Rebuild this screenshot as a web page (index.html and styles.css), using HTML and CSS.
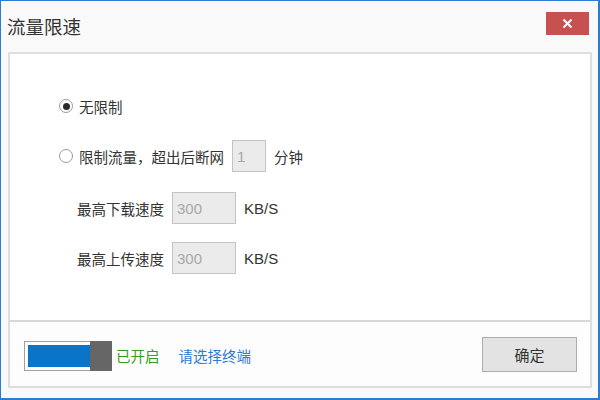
FILE: index.html
```html
<!DOCTYPE html>
<html lang="zh-CN">
<head>
    <meta charset="UTF-8">
    <title>流量限速</title>
    <link rel="stylesheet" href="styles.css">
</head>
<body>
    <div class="window">
        <div class="title-bar">
            <span class="title">流量限速</span>
            <button class="close-btn" type="button">
                <svg width="11" height="11" viewBox="0 0 11 11"><path d="M1.5 1.5 L9.5 9.5 M9.5 1.5 L1.5 9.5" stroke="#fff" stroke-width="2" fill="none"/></svg>
            </button>
        </div>

        <div class="panel">
            <div class="content">
                <label class="radio-row">
                    <span class="radio checked"></span>
                    <span>无限制</span>
                </label>
                <label class="radio-row limit">
                    <span class="radio"></span>
                    <span>限制流量，超出后断网</span>
                    <input class="field small" type="text" value="1" disabled>
                    <span class="unit">分钟</span>
                </label>
                <div class="speed-row">
                    <span>最高下载速度</span>
                    <input class="field" type="text" value="300" disabled>
                    <span class="unit">KB/S</span>
                </div>
                <div class="speed-row">
                    <span>最高上传速度</span>
                    <input class="field" type="text" value="300" disabled>
                    <span class="unit">KB/S</span>
                </div>
            </div>

            <div class="footer">
                <div class="toggle">
                    <span class="toggle-fill"></span>
                    <span class="toggle-knob"></span>
                </div>
                <span class="status">已开启</span>
                <a class="pick-link" href="#">请选择终端</a>
                <button class="ok-btn" type="button">确定</button>
            </div>
        </div>
    </div>
</body>
</html>
```

FILE: styles.css
```css
* {
    box-sizing: border-box;
}

body {
    margin: 0;
    font-family: "Noto Sans CJK SC", "Liberation Sans", sans-serif;
    font-size: 14.5px;
    color: #333;
}

.window {
    width: 600px;
    height: 400px;
    background: #f9f9f9;
    border: 1px solid #2b7cd3;
    border-right-width: 2px;
    border-bottom-width: 2px;
    display: flex;
    flex-direction: column;
}

.title-bar {
    height: 51px;
    display: flex;
    align-items: center;
    justify-content: space-between;
    padding: 0 9px 6px 6px;
}

.title {
    font-size: 18.5px;
    color: #333;
    margin-top: 4px;
}

.close-btn {
    width: 43px;
    height: 23px;
    border: none;
    background: #c75050;
    display: flex;
    align-items: center;
    justify-content: center;
    padding: 0;
}

.panel {
    flex: 1;
    margin: 0 6px 10px 7px;
    border: 2px solid #dedede;
    display: flex;
    flex-direction: column;
}

.content {
    height: 268px;
    background: #fff;
    border-bottom: 2px solid #d8d8d8;
    padding: 35px 0 0 49px;
}

.radio-row {
    display: flex;
    align-items: center;
    height: 34px;
    margin-bottom: 16px;
}

.radio-row.limit {
    margin-bottom: 19px;
}

.radio {
    width: 14px;
    height: 14px;
    border: 1px solid #9a9a9a;
    border-radius: 50%;
    background: #fff;
    margin-right: 6px;
    display: flex;
    align-items: center;
    justify-content: center;
}

.radio.checked::after {
    content: "";
    width: 7px;
    height: 7px;
    border-radius: 50%;
    background: #2b2b2b;
}

.field {
    width: 64px;
    height: 32px;
    border: 1px solid #c4c4c4;
    background: #ebebeb;
    color: #a8a8a8;
    font-family: "Liberation Sans", sans-serif;
    font-size: 15px;
    padding: 0 0 0 4px;
    margin-left: 8px;
}

.field.small {
    width: 34px;
    margin-left: 8px;
}

.unit {
    margin-left: 8px;
}

.speed-row {
    display: flex;
    align-items: center;
    height: 32px;
    margin-bottom: 18px;
    padding-left: 18px;
}

.speed-row .unit {
    font-family: "Liberation Sans", sans-serif;
    font-size: 15px;
}

.footer {
    flex: 1;
    display: flex;
    align-items: center;
    padding: 0 13px 0 14px;
    background: #fdfdfd;
}

.toggle {
    width: 88px;
    height: 30px;
    border: 1px solid #a0a0a0;
    background: #fff;
    display: flex;
    padding: 3px 0 3px 3px;
    position: relative;
    margin-top: 3px;
}

.toggle-fill {
    width: 62px;
    background: #0a74c9;
}

.toggle-knob {
    position: absolute;
    top: -1px;
    right: -1px;
    width: 22px;
    height: 30px;
    background: #666;
}

.status {
    color: #3a9a1c;
    margin-left: 4px;
    margin-top: 3px;
}

.pick-link {
    color: #2b7bd6;
    text-decoration: none;
    margin-left: 19px;
    margin-top: 3px;
}

.ok-btn {
    margin-left: auto;
    width: 95px;
    height: 35px;
    border: 1px solid #adadad;
    background: #e3e3e3;
    font-family: "Noto Sans CJK SC", sans-serif;
    font-size: 15px;
    color: #333;
}
```
